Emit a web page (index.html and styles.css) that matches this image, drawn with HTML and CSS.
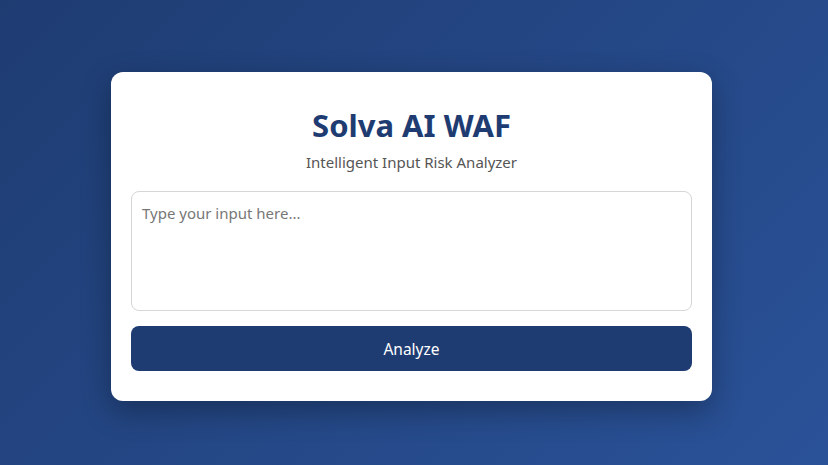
FILE: index.html
```html
<!DOCTYPE html>
<html lang="en">
<head>
<meta charset="utf-8">
<title>Solva AI WAF</title>
<link rel="stylesheet" href="styles.css">
</head>
<body>
  <main class="card">
    <h1 class="title">Solva AI WAF</h1>
    <p class="subtitle">Intelligent Input Risk Analyzer</p>
    <textarea class="input" placeholder="Type your input here..."></textarea>
    <button class="btn" type="button">Analyze</button>
  </main>
</body>
</html>
```
FILE: styles.css
```css
* { box-sizing: border-box; }
html, body { height: 100%; }
body {
  margin: 0;
  font-family: "Noto Sans", "Open Sans", sans-serif;
  background: linear-gradient(135deg, #1e3c72, #2a5298);
  display: flex;
  align-items: center;
  justify-content: center;
  padding: 8px 5px 0 0;
}
.card {
  width: 601px;
  background: #fff;
  border-radius: 12px;
  padding: 20px 20px 30px;
  box-shadow: 0 10px 30px rgba(0, 0, 0, 0.3);
  display: flex;
  flex-direction: column;
}
.title {
  margin: 14px 0 0;
  text-align: center;
  color: #1e3c72;
  font-size: 31px;
  line-height: 38px;
  font-weight: 700;
}
.subtitle {
  margin: 9px 0 0;
  text-align: center;
  color: #555;
  font-size: 15px;
  line-height: 19px;
}
.input {
  margin-top: 19px;
  height: 120px;
  border: 1px solid #d6d6d6;
  border-radius: 8px;
  padding: 11px 10px;
  font-family: inherit;
  font-size: 15px;
  resize: none;
  color: #333;
}
.input::placeholder { color: #777; }
.btn {
  margin-top: 15px;
  height: 45px;
  border: none;
  border-radius: 8px;
  background: #1e3c72;
  color: #fff;
  font-family: inherit;
  font-size: 15.5px;
}
```
